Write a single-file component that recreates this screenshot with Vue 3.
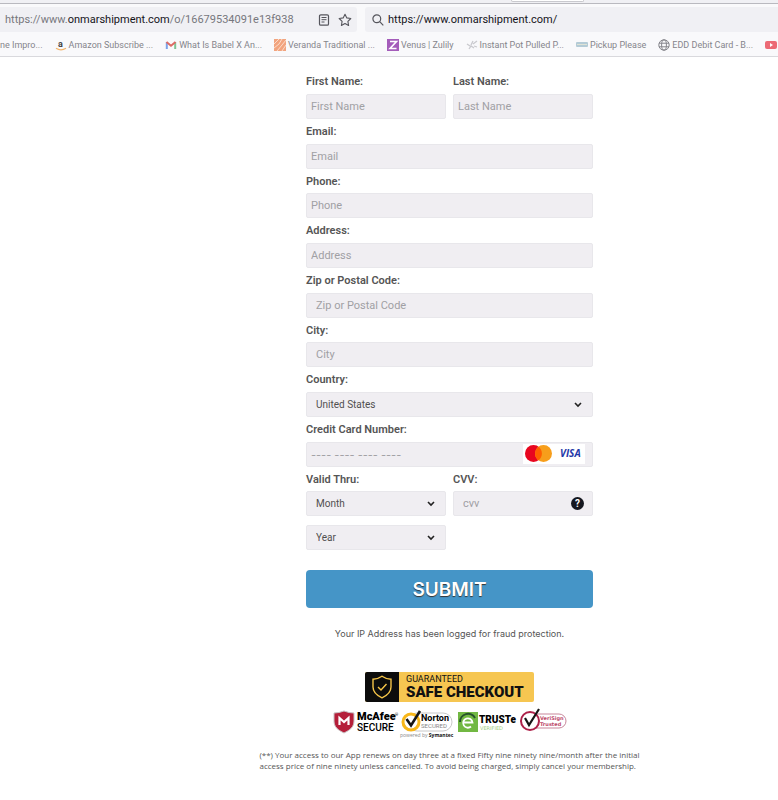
<template>
  <div class="page">
    <header class="browser">
      <div class="tabs"><span class="tab"></span></div>
      <div class="toolbar">
        <div class="url">
          <div class="address" role="textbox" aria-label="Address">
            https://www.<b>onmarshipment.com</b>/o/16679534091e13f938
          </div>
          <button type="button" aria-label="Reader view">
            <svg width="12" height="12" viewBox="0 0 12 12" fill="none" stroke="#55555c">
              <rect x="1.5" y="0.8" width="9" height="10.4" rx="1.3" stroke-width="1.2" />
              <path d="M3.5 3.5h5M3.5 5.7h5M3.5 8h3" />
            </svg>
          </button>
          <button type="button" aria-label="Bookmark this page">
            <svg width="14" height="14" viewBox="0 0 14 14" fill="none" stroke="#55555c" stroke-width="1.1" stroke-linejoin="round">
              <path d="M7 1.2l1.8 3.7 4 .6-2.9 2.9.7 4.1L7 10.6l-3.6 1.9.7-4.1L1.2 5.5l4-.6z" />
            </svg>
          </button>
        </div>
        <label class="search">
          <svg width="12" height="12" viewBox="0 0 12 12" fill="none" stroke="#55555c" stroke-width="1.2">
            <circle cx="4.8" cy="4.8" r="3.9" />
            <path d="M7.7 7.7l3.6 3.6" />
          </svg>
          <input v-model="search" type="text" aria-label="Search" />
        </label>
      </div>
      <nav class="bookmarks">
        <a v-for="item in bookmarks" :key="item.id" href="#">
          <svg v-if="item.icon === 'amazon'" width="12" height="12" viewBox="0 0 12 12">
            <text x="3" y="8" class="amazon">a</text>
            <path d="M1 9.3q5 3.2 10 0" fill="none" stroke="#f3b56b" stroke-width="1.2" />
          </svg>
          <svg v-else-if="item.icon === 'gmail'" width="12" height="12" viewBox="0 0 12 12" fill="none" stroke-width="2">
            <path d="M1.8 10V3" stroke="#7ba3ea" />
            <path d="M10.2 10V3" stroke="#7fc393" />
            <path d="M1.5 3L6 6.7 10.5 3" stroke="#dd6b64" />
          </svg>
          <svg v-else-if="item.icon === 'veranda'" width="12" height="12" viewBox="0 0 12 12">
            <rect width="12" height="12" fill="#f2a47e" />
            <path d="M0 5l5-5M0 9l5-4 3-5M3 12l5-6 4-5M8 12l4-6" fill="none" stroke="#fbdccb" />
          </svg>
          <svg v-else-if="item.icon === 'zulily'" width="12" height="12" viewBox="0 0 12 12">
            <rect width="12" height="12" fill="#a45cba" />
            <path d="M3 2.5h6.5l-6.5 7h6.5" fill="none" stroke="#fff" stroke-width="1.6" />
          </svg>
          <svg v-else-if="item.icon === 'pot'" width="12" height="12" viewBox="0 0 12 12" fill="none" stroke="#c9c9ce" stroke-width="1.3">
            <path d="M1 5l3 2M3 10l2-3 3 2M5 6l2-4M7 5l4-3M8 7l3 1" />
          </svg>
          <svg v-else-if="item.icon === 'pickup'" width="12" height="12" viewBox="0 0 12 12">
            <rect y="3" width="12" height="5" rx="1" fill="#b4cbd6" />
            <path d="M1 5.5h10" stroke="#dfe3d6" />
          </svg>
          <svg v-else-if="item.icon === 'globe'" width="12" height="12" viewBox="0 0 12 12" fill="none" stroke="#85858b">
            <circle cx="6" cy="6" r="5.2" />
            <ellipse cx="6" cy="6" rx="2.4" ry="5.2" />
            <path d="M1 4.2h10M1 7.8h10" />
          </svg>
          <svg v-else-if="item.icon === 'video'" width="12" height="12" viewBox="0 0 12 12">
            <rect y="2" width="12" height="8" rx="2" fill="#ec6a75" />
            <path d="M5 4l3 2-3 2z" fill="#fff" />
          </svg>
          <span v-if="item.name">{{ item.name }}</span>
        </a>
      </nav>
    </header>

    <main class="content">
      <form @submit.prevent>
        <div class="row">
          <div class="field">
            <label for="first">First Name:</label>
            <input id="first" type="text" placeholder="First Name" />
          </div>
          <div class="field">
            <label for="last">Last Name:</label>
            <input id="last" type="text" placeholder="Last Name" />
          </div>
        </div>
        <div v-for="field in fields" :key="field.id" class="row">
          <div class="field">
            <label :for="field.id">{{ field.name }}:</label>
            <input :id="field.id" type="text" :class="{ inset: field.inset }" :placeholder="field.name" />
          </div>
        </div>
        <div class="row">
          <div class="field">
            <label for="country">Country:</label>
            <div class="control">
              <select id="country"><option>United States</option></select>
              <svg class="chevron" width="8" height="6" viewBox="0 0 8 6"><path d="M1 1l3 3 3-3" /></svg>
            </div>
          </div>
        </div>
        <div class="row">
          <div class="field">
            <label for="card">Credit Card Number:</label>
            <div class="control">
              <input id="card" type="text" class="number" placeholder="---- ---- ---- ----" />
              <svg class="cards" width="62" height="20" viewBox="0 0 62 20">
                <rect width="62" height="20" fill="#fff" />
                <circle cx="10.5" cy="9.5" r="8.5" fill="#e8061f" />
                <circle cx="20.5" cy="9.5" r="8.5" fill="#f79e1b" />
                <path d="M15.5 2.7a8.5 8.5 0 0 1 0 13.6a8.5 8.5 0 0 1 0-13.6z" fill="#ff5f00" />
                <text x="37" y="13" class="visa">VISA</text>
              </svg>
            </div>
          </div>
        </div>
        <div class="row">
          <div class="field">
            <label for="month">Valid Thru:</label>
            <div class="control">
              <select id="month"><option>Month</option></select>
              <svg class="chevron" width="8" height="6" viewBox="0 0 8 6"><path d="M1 1l3 3 3-3" /></svg>
            </div>
            <div class="control year">
              <select id="year" aria-label="Year"><option>Year</option></select>
              <svg class="chevron" width="8" height="6" viewBox="0 0 8 6"><path d="M1 1l3 3 3-3" /></svg>
            </div>
          </div>
          <div class="field">
            <label for="cvv">CVV:</label>
            <div class="control">
              <input id="cvv" type="text" class="inset" placeholder="cvv" />
              <button type="button" class="help" aria-label="What is CVV">?</button>
            </div>
          </div>
        </div>
        <button type="submit" class="submit">SUBMIT</button>
      </form>

      <p class="notice">Your IP Address has been logged for fraud protection.</p>

      <div class="checkout">
        <span class="shield">
          <svg width="20" height="24" viewBox="0 0 20 24" fill="none" stroke="#f6c548" stroke-width="1.4">
            <path d="M10 1.2C7.5 3 4.5 4 1 4.2V12c0 5 4 8.5 9 10.8 5-2.3 9-5.8 9-10.8V4.2C15.5 4 12.5 3 10 1.2z" />
            <path d="M6 12l3 3 5.5-6" />
          </svg>
        </span>
        <span class="guarantee">
          <small>GUARANTEED</small>
          <strong>SAFE CHECKOUT</strong>
        </span>
      </div>

      <div class="badges">
        <svg width="64" height="28" viewBox="0 0 64 28">
          <path d="M1 5q5 0 10-2 5 2 10 2v8c0 6-4 9-10 12C5 22 1 19 1 13z" fill="#b51f3a" stroke="#c9c3c5" />
          <path d="M6.5 17V10l4.5 4 4.5-4v7" fill="none" stroke="#fff" stroke-width="2.2" />
          <text x="24" y="12" class="mcafee">McAfee</text>
          <text x="62" y="8" class="tiny">®</text>
          <text x="24" y="23" class="secure">SECURE</text>
        </svg>
        <svg width="54" height="32" viewBox="0 0 54 32">
          <rect x="8" y="5" width="44" height="18" rx="9" fill="#fff" stroke="#c8c8c8" />
          <circle cx="11" cy="14" r="8" fill="#fff" stroke="#f8b719" stroke-width="3" />
          <path d="M6.5 11l4.5 6.5L20 3" fill="none" stroke="#161616" stroke-width="2.6" />
          <text x="21" y="13" class="norton">Norton</text>
          <text x="21" y="20" class="secured">SECURED</text>
          <text x="0" y="29" class="powered">powered by <tspan>Symantec</tspan></text>
        </svg>
        <svg width="59" height="28" viewBox="0 0 59 28">
          <rect x="1" y="4" width="20" height="20" fill="#72b843" />
          <path d="M3 14a8 8 0 0 1 15-4" fill="none" stroke="#26512c" stroke-width="2" />
          <path d="M6.5 14.5h9a4.7 4.7 0 1 0-1.5 4" fill="none" stroke="#fff" stroke-width="1.8" />
          <text x="22" y="15" class="truste">TRUSTe</text>
          <text x="23" y="22" class="verified">VERIFIED</text>
        </svg>
        <svg width="48" height="28" viewBox="0 0 48 28">
          <rect x="8" y="6" width="39" height="14" rx="7" fill="#fff" stroke="#c9879b" />
          <circle cx="11" cy="13" r="9" fill="#fff" stroke="#ad2149" stroke-width="2" />
          <path d="M6 10l4 7L20 1" fill="none" stroke="#161616" stroke-width="2.2" />
          <text x="21" y="12" class="verisign">VeriSign</text>
          <text x="21" y="18" class="verisign">Trusted</text>
        </svg>
      </div>

      <p class="terms">
        (**) Your access to our App renews on day three at a fixed Fifty nine ninety nine/month after the initial<br />
        access price of nine ninety unless cancelled. To avoid being charged, simply cancel your membership.
      </p>
    </main>
  </div>
</template>

<script setup>
import { ref } from "vue";
const search = ref("https://www.onmarshipment.com/");
const bookmarks = [
  { id: 0, icon: "", name: "ne Impro..." },
  { id: 1, icon: "amazon", name: "Amazon Subscribe ..." },
  { id: 2, icon: "gmail", name: "What Is Babel X An..." },
  { id: 3, icon: "veranda", name: "Veranda Traditional ..." },
  { id: 4, icon: "zulily", name: "Venus | Zulily" },
  { id: 5, icon: "pot", name: "Instant Pot Pulled P..." },
  { id: 6, icon: "pickup", name: "Pickup Please" },
  { id: 7, icon: "globe", name: "EDD Debit Card - B..." },
  { id: 8, icon: "video", name: "" },
];
const fields = [
  { id: "email", name: "Email" },
  { id: "phone", name: "Phone" },
  { id: "street", name: "Address" },
  { id: "zip", name: "Zip or Postal Code", inset: true },
  { id: "city", name: "City", inset: true },
];
</script>

<style>
body {
  margin: 0;
  background: #fff;
}
</style>

<style scoped>
.page {
  font-family: Inter, "Liberation Sans", sans-serif;
  color: #555;
  overflow: hidden;
}
.page * {
  box-sizing: border-box;
}
input,
select,
button {
  font-family: inherit;
  margin: 0;
  outline: none;
}
.browser {
  background: #f9f9fb;
  border-bottom: 1px solid #d9d9dd;
}
.tabs {
  height: 4px;
  padding-left: 511px;
  background: #f0f0f4;
  border-bottom: 1px solid #b9b9bf;
}
.tab {
  display: block;
  width: 73px;
  height: 2px;
  background: #fff;
  border: 1px solid #c9c9ce;
  border-top: 0;
  border-radius: 0 0 3px 3px;
}
.toolbar {
  display: flex;
  gap: 8px;
  padding: 3px 0;
}
.url,
.search {
  display: flex;
  align-items: center;
  height: 25px;
  background: #f0f0f4;
  border-radius: 3px 0 0 3px;
  font: 11px Roboto, sans-serif;
}
.url {
  flex: 0 0 357px;
  padding: 0 5px;
  gap: 8px;
  border-radius: 0 3px 3px 0;
}
.address {
  flex: 1;
  color: #77777d;
  white-space: nowrap;
}
.address b {
  font-weight: 400;
  color: #15141a;
}
.url button {
  display: flex;
  padding: 0;
  border: 0;
  background: none;
}
.search {
  flex: 1;
  padding-left: 7px;
  gap: 4px;
}
.search input {
  flex: 1;
  padding: 0;
  border: 0;
  background: none;
  font: inherit;
  color: #15141a;
}
.bookmarks {
  display: flex;
  align-items: center;
  gap: 12px;
  height: 21px;
  padding-bottom: 2px;
  white-space: nowrap;
}
.bookmarks a {
  display: flex;
  flex: none;
  align-items: center;
  gap: 2px;
  font: 9px Roboto, sans-serif;
  color: #85858b;
  text-decoration: none;
}
.amazon {
  font: bold 9px Roboto, sans-serif;
  fill: #444;
}
.content {
  display: flex;
  flex-direction: column;
  align-items: center;
  padding: 12px 0 24px 121px;
}
form {
  width: 100%;
  max-width: 287px;
  font-family: Roboto, "Liberation Sans", sans-serif;
}
.row {
  display: flex;
  gap: 7px;
}
.field {
  flex: 1;
  min-width: 0;
}
.field label {
  display: block;
  height: 25px;
  line-height: 26px;
  font-size: 11px;
  font-weight: 600;
}
.row:nth-child(3n) label {
  height: 24px;
}
.field input,
.field select {
  display: block;
  width: 100%;
  height: 25px;
  padding: 0 4px;
  border: 1px solid #e8e7eb;
  border-radius: 2px;
  background: #f0eef2;
  font-size: 11px;
  color: #505050;
  appearance: none;
}
.field select {
  padding: 0 9px;
  font-size: 10px;
}
.field input.inset {
  padding: 0 9px;
}
.field input.number {
  font-family: Inter, sans-serif;
}
input::placeholder {
  color: #a0a0a4;
  opacity: 1;
}
.control {
  position: relative;
}
.year {
  margin-top: 9px;
}
.chevron {
  position: absolute;
  top: 10px;
  right: 11px;
  fill: none;
  stroke: #222;
  stroke-width: 1.6;
  pointer-events: none;
}
.cards {
  position: absolute;
  top: 2px;
  right: 8px;
}
.visa {
  font: italic bold 10px "Open Sans", sans-serif;
  fill: #2437a8;
}
.help {
  position: absolute;
  top: 6px;
  right: 9px;
  width: 13px;
  height: 13px;
  padding: 0;
  border: 0;
  border-radius: 50%;
  background: #15171f;
  color: #fff;
  font-size: 10px;
  font-weight: 700;
  line-height: 13px;
}
.submit {
  display: block;
  width: 100%;
  height: 38px;
  margin-top: 20px;
  border: 0;
  border-radius: 4px;
  background: #4595c7;
  color: #fff;
  font-family: Inter, sans-serif;
  font-size: 19px;
  font-weight: 600;
  text-shadow: 0 1px 1px #333;
}
p {
  margin: 0;
  font-size: 9px;
}
.notice {
  margin-top: 20px;
  line-height: 12px;
}
.checkout {
  display: flex;
  width: 169px;
  height: 30px;
  margin-top: 32px;
  overflow: hidden;
  border-radius: 2px;
  background: #f6c651;
  font-family: Roboto, sans-serif;
  color: #111;
}
.shield {
  display: flex;
  align-items: center;
  justify-content: center;
  width: 34px;
  background: #0c0c0c;
}
.guarantee {
  display: flex;
  flex-direction: column;
  justify-content: center;
  padding-left: 7px;
}
.guarantee small {
  font-size: 9px;
  line-height: 11px;
}
.guarantee strong {
  font-size: 15px;
  font-weight: 900;
  line-height: 15px;
  white-space: nowrap;
}
.badges {
  display: flex;
  gap: 3px;
  margin-top: 6px;
}
.badges svg {
  overflow: visible;
}
.mcafee {
  font: 900 11px Roboto, sans-serif;
}
.secure {
  font: 500 10px Roboto, sans-serif;
}
.tiny {
  font: 4px Roboto, sans-serif;
}
.norton {
  font: bold 9px Roboto, sans-serif;
}
.secured {
  font: 6px Roboto, sans-serif;
  fill: #888;
}
.powered {
  font: 5px "Open Sans", sans-serif;
  fill: #888;
}
.powered tspan {
  font-weight: bold;
  fill: #111;
}
.truste {
  font: 900 10px Roboto, sans-serif;
}
.verified {
  font: 5px "DejaVu Sans", sans-serif;
  fill: #9dcc7b;
}
.verisign {
  font: bold 5px "DejaVu Sans", sans-serif;
  fill: #bd4a6b;
}
.terms {
  margin-top: 9px;
  font-family: "Open Sans", sans-serif;
  font-size: 8px;
  line-height: 11px;
}
</style>
